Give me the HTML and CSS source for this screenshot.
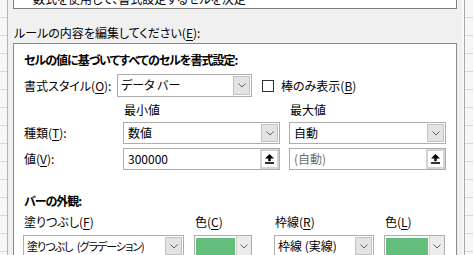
FILE: index.html
```html
<!DOCTYPE html>
<html lang="ja">
<head>
    <meta charset="UTF-8">
    <title>書式ルールの編集</title>
    <link rel="stylesheet" href="styles.css">
</head>
<body>
    <div class="sheet sheet--left"></div>
    <div class="dialog">
        <div class="rule-list">数式を使用して、書式設定するセルを決定</div>
        <div class="caption">ルールの内容を編集してください(<u>E</u>):</div>
        <div class="panel">
            <div class="title">セルの値に基づいてすべてのセルを書式設定:</div>

            <div class="row row--style">
                <div class="label label--style">書式スタイル(<u>O</u>):</div>
                <div class="select select--style">
                    <span class="select__text">データ バー</span>
                    <span class="drop"><svg width="8" height="5" viewBox="0 0 8 5"><polyline points="0.5,0.5 4,4 7.5,0.5" fill="none" stroke="#606060" stroke-width="1"/></svg></span>
                </div>
                <span class="check"></span>
                <span class="check-label">棒のみ表示(<u>B</u>)</span>
            </div>

            <div class="grid grid--head">
                <div></div>
                <div class="head">最小値</div>
                <div class="head">最大値</div>
            </div>

            <div class="grid grid--row">
                <div class="label">種類(<u>T</u>):</div>
                <div class="select select--wide">
                    <span class="select__text">数値</span>
                    <span class="drop"><svg width="8" height="5" viewBox="0 0 8 5"><polyline points="0.5,0.5 4,4 7.5,0.5" fill="none" stroke="#606060" stroke-width="1"/></svg></span>
                </div>
                <div class="select select--wide">
                    <span class="select__text">自動</span>
                    <span class="drop"><svg width="8" height="5" viewBox="0 0 8 5"><polyline points="0.5,0.5 4,4 7.5,0.5" fill="none" stroke="#606060" stroke-width="1"/></svg></span>
                </div>
            </div>

            <div class="grid grid--row grid--value">
                <div class="label">値(<u>V</u>):</div>
                <div class="input">
                    <span class="select__text">300000</span>
                    <span class="ref"><svg width="9" height="10" viewBox="0 0 9 10"><polygon points="4.5,0 0,4.5 9,4.5" fill="#000"/><rect x="3.3" y="4" width="2.4" height="3.2" fill="#000"/><rect x="0" y="8.2" width="9" height="1.6" fill="#000"/></svg></span>
                </div>
                <div class="input">
                    <span class="select__text select__text--muted">(自動)</span>
                    <span class="ref"><svg width="9" height="10" viewBox="0 0 9 10"><polygon points="4.5,0 0,4.5 9,4.5" fill="#000"/><rect x="3.3" y="4" width="2.4" height="3.2" fill="#000"/><rect x="0" y="8.2" width="9" height="1.6" fill="#000"/></svg></span>
                </div>
            </div>

            <div class="title title--bar">バーの外観:</div>

            <div class="grid grid--bar">
                <div class="label">塗りつぶし(<u>F</u>)</div>
                <div class="label">色(<u>C</u>)</div>
                <div class="label">枠線(<u>R</u>)</div>
                <div class="label">色(<u>L</u>)</div>
            </div>

            <div class="grid grid--bar grid--controls">
                <div class="select select--fill">
                    <span class="select__text select__text--tight">塗りつぶし (グラデーション)</span>
                    <span class="drop"><svg width="8" height="5" viewBox="0 0 8 5"><polyline points="0.5,0.5 4,4 7.5,0.5" fill="none" stroke="#606060" stroke-width="1"/></svg></span>
                </div>
                <div class="color color--c">
                    <span class="swatch"></span>
                    <span class="color__drop"><svg width="8" height="5" viewBox="0 0 8 5"><polyline points="0.5,0.5 4,4 7.5,0.5" fill="none" stroke="#606060" stroke-width="1"/></svg></span>
                </div>
                <div class="select select--border">
                    <span class="select__text">枠線 (実線)</span>
                    <span class="drop"><svg width="8" height="5" viewBox="0 0 8 5"><polyline points="0.5,0.5 4,4 7.5,0.5" fill="none" stroke="#606060" stroke-width="1"/></svg></span>
                </div>
                <div class="color color--l">
                    <span class="swatch"></span>
                    <span class="color__drop"><svg width="8" height="5" viewBox="0 0 8 5"><polyline points="0.5,0.5 4,4 7.5,0.5" fill="none" stroke="#606060" stroke-width="1"/></svg></span>
                </div>
            </div>
        </div>
    </div>
    <div class="edge"></div>
    <div class="sheet sheet--right"></div>
</body>
</html>
```

FILE: styles.css
```css
*{
    box-sizing: border-box;
}
body{
    margin: 0;
    width: 473px;
    height: 255px;
    overflow: hidden;
    display: flex;
    background-color: #f0f0f0;
    font-family: "Noto Sans CJK JP", "Noto Sans", sans-serif;
    font-feature-settings: "palt";
    font-size: 12px;
    line-height: 16px;
    color: #000;
}
u{
    text-decoration-thickness: 1px;
    text-underline-offset: 2px;
}
.sheet{
    height: 100%;
    background: repeating-linear-gradient(to bottom, #f6f6f6 0 17px, #d9d9d9 17px 18px);
}
.sheet--left{
    width: 8px;
    border-right: 1px solid #b4b4b4;
}
.sheet--right{
    flex: 1;
    border-left: 1px solid #a9a9a9;
}
.edge{
    width: 2px;
    background-color: #f9f9f9;
}
.dialog{
    width: 454px;
    padding: 0 5px;
}
.rule-list{
    height: 23px;
    margin-top: -14px;
    padding: 4px 0 0 19px;
    border: 1px solid #7f7f7f;
    background-color: #fff;
    white-space: nowrap;
}
.caption{
    margin: 16px 0 2px 1px;
}
.panel{
    height: 260px;
    padding: 8px 0 0 10px;
    border: 1px solid #8a8a8a;
    background-color: #fff;
}
.title{
    font-weight: bold;
    letter-spacing: -1px;
}
.title--bar{
    margin-top: 23px;
}
.row{
    display: flex;
    align-items: center;
}
.row--style{
    margin-top: 6px;
}
.label--style{
    width: 93px;
}
.grid{
    display: grid;
    align-items: center;
}
.grid--head{
    grid-template-columns: 99px 166px 157px;
    margin-top: 5px;
}
.head{
    padding-left: 1px;
}
.grid--row{
    grid-template-columns: 99px 166px 157px;
    margin-top: 4px;
}
.grid--value{
    margin-top: 4px;
}
.grid--bar{
    grid-template-columns: 171px 80px 110px 62px;
    margin-top: 5px;
    margin-left: -1px;
}
.grid--bar .label{
    padding-left: 1px;
}
.select,
.input,
.color{
    display: flex;
    align-items: stretch;
    height: 22px;
    border: 1px solid #adadad;
    background-color: #fff;
}
.select--style{
    width: 135px;
    height: 23px;
}
.select--wide,
.input{
    width: 157px;
}
.select--fill{
    width: 161px;
}
.select--border{
    width: 100px;
}
.color--c{
    width: 58px;
}
.color--l{
    width: 61px;
}
.select__text{
    flex: 1;
    padding-left: 3px;
    line-height: 20px;
    white-space: nowrap;
    overflow: hidden;
}
.select__text--tight{
    font-size: 11px;
    letter-spacing: -1px;
    word-spacing: 3px;
}
.select--wide .select__text,
.input .select__text{
    padding-left: 4px;
}
.select__text--muted{
    color: #6d6d6d;
}
.drop{
    display: flex;
    align-items: center;
    justify-content: center;
    width: 17px;
    margin: 1px 1px 1px 0;
    border: 1px solid #c2c2c2;
    background-color: #e3e3e3;
}
.ref{
    display: flex;
    align-items: center;
    justify-content: center;
    width: 19px;
    margin: 0;
    border: 2px solid #d4d4d4;
    background-color: #fff;
}
.color .swatch{
    flex: 1;
    margin: 2px 1px 1px 1px;
    background-color: #63be7b;
}
.color__drop{
    display: flex;
    align-items: center;
    justify-content: center;
    width: 15px;
    border-left: 1px solid #cfcfcf;
    background-color: #ececec;
}
.check{
    width: 12px;
    height: 12px;
    margin-left: 10px;
    border: 1px solid #333;
    background-color: #fff;
}
.check-label{
    margin-left: 7px;
}
```
